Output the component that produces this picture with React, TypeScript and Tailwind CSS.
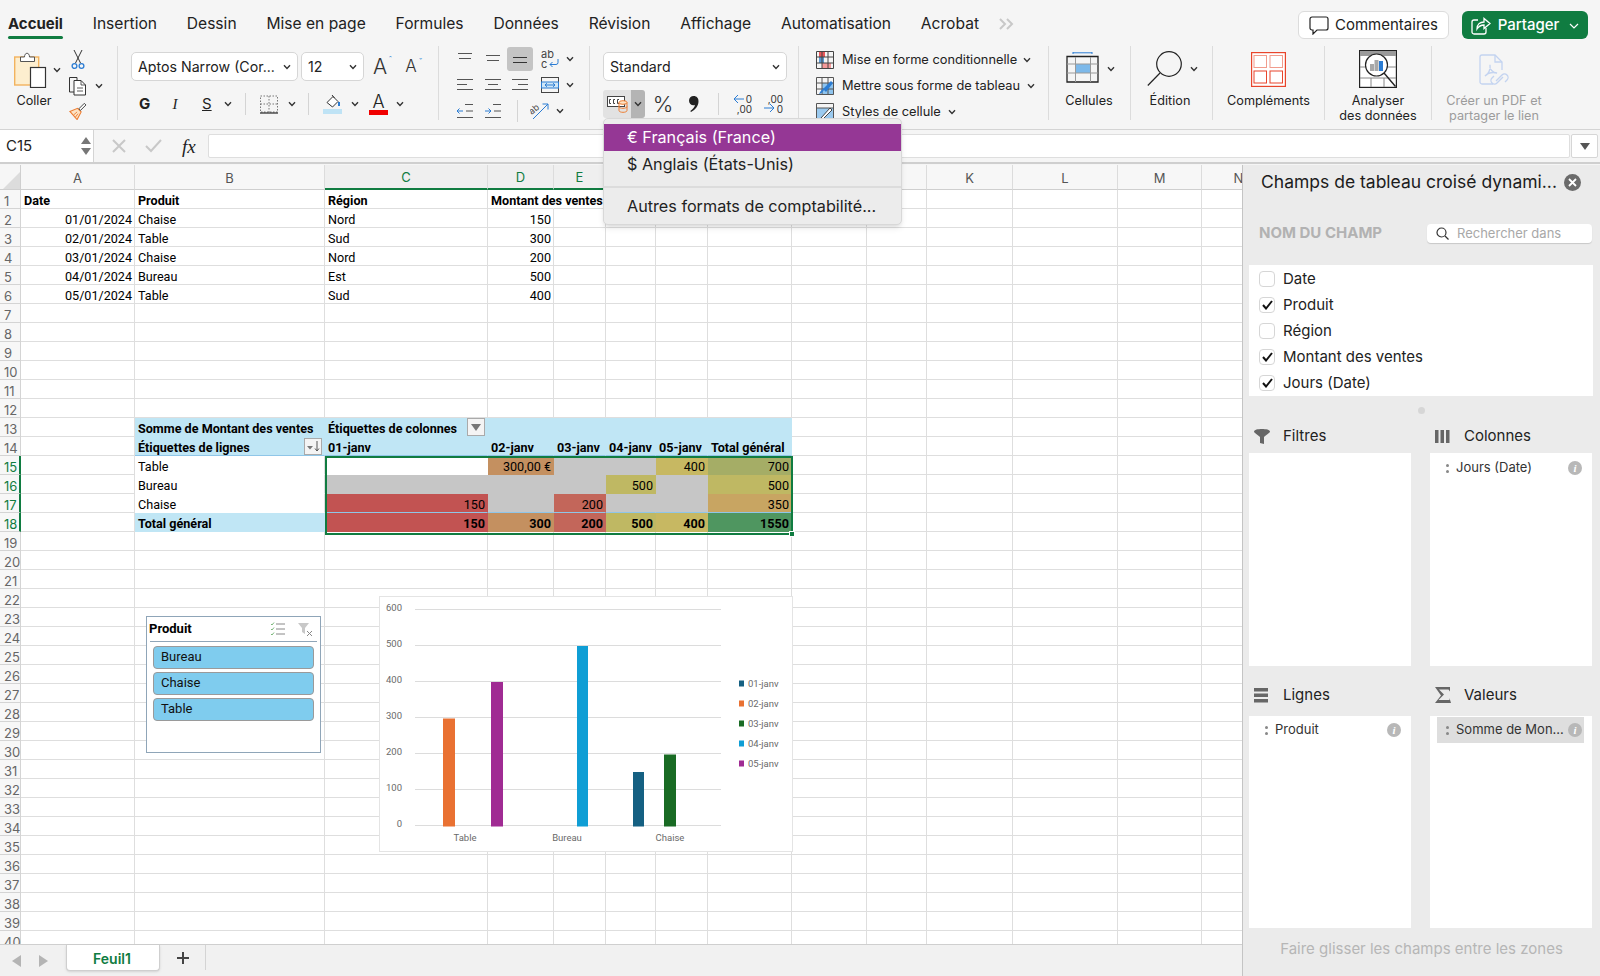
import React from 'react';
import clsx from 'clsx';

const tabs = ['Accueil', 'Insertion', 'Dessin', 'Mise en page', 'Formules', 'Données', 'Révision', 'Affichage', 'Automatisation', 'Acrobat'];

const columns = ['A', 'B', 'C', 'D', 'E', 'F', 'G', 'H', 'I', 'J', 'K', 'L', 'M', 'N'];

const cells: Record<string, string> = {
  A1: 'Date', B1: 'Produit', C1: 'Région', D1: 'Montant des ventes',
  A2: '01/01/2024', B2: 'Chaise', C2: 'Nord', D2: '150',
  A3: '02/01/2024', B3: 'Table', C3: 'Sud', D3: '300',
  A4: '03/01/2024', B4: 'Chaise', C4: 'Nord', D4: '200',
  A5: '04/01/2024', B5: 'Bureau', C5: 'Est', D5: '500',
  A6: '05/01/2024', B6: 'Table', C6: 'Sud', D6: '400',
  B13: 'Somme de Montant des ventes', C13: 'Étiquettes de colonnes',
  B14: 'Étiquettes de lignes', C14: '01-janv', D14: '02-janv', E14: '03-janv', F14: '04-janv', G14: '05-janv', H14: 'Total général',
  B15: 'Table', D15: '300,00 €', G15: '400', H15: '700',
  B16: 'Bureau', F16: '500', H16: '500',
  B17: 'Chaise', C17: '150', E17: '200', H17: '350',
  B18: 'Total général', C18: '150', D18: '300', E18: '200', F18: '500', G18: '400', H18: '1550',
};

const heat: Record<string, string> = {
  C15: 'bg-white', D15: 'bg-[#c49060]', E15: 'bg-[#c6c6c6]', F15: 'bg-[#c6c6c6]', G15: 'bg-[#c7b862]', H15: 'bg-[#a5ad66]',
  C16: 'bg-[#c6c6c6]', D16: 'bg-[#c6c6c6]', E16: 'bg-[#c6c6c6]', F16: 'bg-[#bfb863]', G16: 'bg-[#c6c6c6]', H16: 'bg-[#bfb863]',
  C17: 'bg-[#c25352]', D17: 'bg-[#c6c6c6]', E17: 'bg-[#c3665a]', F17: 'bg-[#c6c6c6]', G17: 'bg-[#c6c6c6]', H17: 'bg-[#c8a562]',
  C18: 'bg-[#c25352]', D18: 'bg-[#c49060]', E18: 'bg-[#c3665a]', F18: 'bg-[#bfb863]', G18: 'bg-[#c7b862]', H18: 'bg-[#4f9660]',
};

const pivotCols = ['B', 'C', 'D', 'E', 'F', 'G', 'H'];
const activeCols = ['C', 'D', 'E', 'F', 'G', 'H'];

function Chevron({ className }: { className?: string }) {
  return (
    <svg width="8" height="6" viewBox="0 0 8 6" className={clsx('shrink-0', className)} fill="none" stroke="#333" strokeWidth="1.4">
      <path d="M1 1.2 4 4.4 7 1.2" />
    </svg>
  );
}

function Lines({ rows, color = '#555', className }: { rows: number[][]; color?: string; className?: string }) {
  return (
    <svg width="18" height="14" viewBox="0 0 18 14" className={className} fill="none" stroke={color} strokeWidth="1">
      {rows.map(([a, b], i) => (
        <path key={i} d={`M${a} ${1.5 + i * 5}H${b}`} />
      ))}
    </svg>
  );
}

function PasteIcon() {
  return (
    <svg width="34" height="36" viewBox="0 0 34 36" fill="none">
      <rect x="0.7" y="5" width="24" height="28" fill="#fdeecf" stroke="#f2b35f" strokeWidth="1.4" />
      <path d="M6.5 9.5V5h4c0-5 5-5 5 0h5v4.500z" fill="#fff" stroke="#555" />
      <rect x="16.500" y="15.500" width="15" height="20" fill="#fff" stroke="#333" strokeWidth="1.2" />
    </svg>
  );
}

function ScissorsIcon() {
  return (
    <svg width="14" height="20" viewBox="0 0 14 20" fill="none" strokeWidth="1">
      <path d="M3 0 9.500 13M11 0 4.500 13" stroke="#333" />
      <circle cx="3.500" cy="16" r="2.400" stroke="#2b7cd3" strokeWidth="1.300" />
      <circle cx="10.500" cy="16" r="2.400" stroke="#2b7cd3" strokeWidth="1.300" />
    </svg>
  );
}

function CopyIcon() {
  return (
    <svg width="20" height="20" viewBox="0 0 20 20" fill="none" stroke="#333">
      <path d="M7 16H1.500V1.500H9V4" />
      <path d="M6 4.500h7l4.500 4.500v10H6z" fill="#fff" />
      <path d="M13 4.500V9h4.500M9 12h6M9 15h6" strokeWidth="0.8" />
    </svg>
  );
}

function PainterIcon() {
  return (
    <svg width="20" height="20" viewBox="0 0 20 20" fill="none">
      <path d="M1 10.500 9.500 7l4 4L9 19.500z" fill="#fde3c4" stroke="#ed7d31" strokeWidth="1.200" />
      <path d="M5 14.500 9 11M7 17l3-4" stroke="#ed7d31" />
      <path d="M11 7.500 17 1.500l1.800 1.800-6 6z" fill="#fff" stroke="#333" />
    </svg>
  );
}

function BordersIcon() {
  return (
    <svg width="18" height="19" viewBox="0 0 18 19" fill="none" stroke="#777" strokeWidth="1" strokeDasharray="1.500 1.500">
      <path d="M.5 1H17.500V17H.5zM9 1V17M.5 9H17.500" />
      <path d="M0 18H18" stroke="#222" strokeWidth="1.200" strokeDasharray="none" />
    </svg>
  );
}

function FillIcon() {
  return (
    <div className="flex w-[19px] flex-col items-center">
      <svg width="16" height="15" viewBox="0 0 16 15" fill="none">
        <path d="M2 8.500 8 2.500l5 5-5.500 5.500z" fill="#fff" stroke="#333" />
        <path d="M7 1 9.500 4" stroke="#333" />
        <path d="M14 8v4" stroke="#2b7cd3" strokeWidth="2" />
      </svg>
      <div className="h-[5px] w-[19px] bg-[#bfe3f5]" />
    </div>
  );
}

function FontColorIcon() {
  return (
    <div className="flex w-[19px] flex-col items-center">
      <span className="text-[18px] font-light leading-[15px]">A</span>
      <div className="mt-[1px] h-[5px] w-[19px] bg-[#f00000]" />
    </div>
  );
}

function WrapIcon() {
  return (
    <div className="relative h-[20px] w-[18px] text-[11px] leading-[10px] text-[#444]">
      <div>ab</div>
      <div>c</div>
      <svg width="10" height="9" viewBox="0 0 10 9" className="absolute left-[8px] top-[10px]" fill="none" stroke="#2b7cd3">
        <path d="M9 0v3.500a2 2 0 0 1-2 2H1M3.500 3 1 5.500 3.500 8" />
      </svg>
    </div>
  );
}

function MergeIcon() {
  return (
    <svg width="18" height="16" viewBox="0 0 18 16" fill="none" stroke="#444">
      <rect x=".5" y=".5" width="17" height="15" />
      <rect x=".5" y="5" width="17" height="6" fill="#cfe6f7" stroke="#2b7cd3" />
      <path d="M4 8h10M6 6.200 4 8l2 1.800M12 6.200 14 8l-2 1.800" stroke="#2b7cd3" />
    </svg>
  );
}

function IndentIcon({ right }: { right?: boolean }) {
  return (
    <svg width="18" height="16" viewBox="0 0 18 16" fill="none" stroke="#555">
      <path d="M9 1.500H17M10 8H17M1 14.500H17" />
      <path d={right ? 'M1 8H7M4.500 5.500 7 8 4.500 10.500' : 'M1 8H7M3.500 5.500 1 8 3.500 10.500'} stroke="#2b7cd3" />
    </svg>
  );
}

function OrientIcon() {
  return (
    <svg width="20" height="18" viewBox="0 0 20 18" fill="none">
      <text x="0" y="10" fontSize="9" fill="#444" transform="rotate(-40 5 9)">ab</text>
      <path d="M3 17 18 2M12.500 2H18V7.500" stroke="#2b7cd3" />
    </svg>
  );
}

function CurrencyIcon() {
  return (
    <svg width="21" height="18" viewBox="0 0 21 18" fill="none">
      <rect x=".5" y="1.500" width="17" height="10" fill="#fff" stroke="#444" />
      <path d="M4 4.500H2.500V8.500H4M8 4.500H6.500V8.500H8M12 4.500H10.500V8.500H12" stroke="#444" />
      <ellipse cx="16" cy="7.500" rx="4" ry="1.800" fill="#fde3c4" stroke="#ed7d31" />
      <path d="M12 7.500V15.500C12 17.900 20 17.900 20 15.500V7.500M12 11.500C12 13.900 20 13.900 20 11.500" fill="none" stroke="#ed7d31" />
    </svg>
  );
}

function CommaIcon() {
  return (
    <svg width="10" height="16" viewBox="0 0 10 16" fill="#222">
      <path d="M4.700 0C7.700 0 9.500 2.200 9.500 5.200 9.500 9.700 6.500 13.700 2 16L1.300 15C4 13.200 5.700 11 6 8.800 5.500 9.200 5 9.300 4.500 9.300 2 9.300 0 7.500 0 4.800 0 2 2 0 4.700 0z" />
    </svg>
  );
}

function DecimalIcon({ more }: { more?: boolean }) {
  return (
    <div className="relative h-[20px] w-[19px] text-[10px] leading-[10px] text-[#333]">
      <div className="absolute right-0 top-0">{more ? ',00' : '0'}</div>
      <div className="absolute right-0 top-[10px]">{more ? '0' : ',00'}</div>
      <svg width="11" height="10" viewBox="0 0 11 10" className={clsx('absolute left-0', more ? 'top-[9px]' : 'top-0')} fill="none" stroke="#2b7cd3">
        <path d={more ? 'M0 5H10M6 1 10 5 6 9' : 'M11 5H1M5 1 1 5 5 9'} />
      </svg>
    </div>
  );
}

function CondFormatIcon() {
  return (
    <svg width="18" height="18" viewBox="0 0 18 18" fill="none">
      <rect x="3" y="0" width="6" height="6" fill="#e8585b" />
      <rect x="3" y="6" width="5" height="6" fill="#5b9bd5" />
      <rect x="6" y="12" width="9" height="5" fill="#f59a9a" />
      <path d="M.5.5h17v17H.5zM6 .5v17M12 .5v17M.5 6h17M.5 12h17" stroke="#444" />
    </svg>
  );
}

function TableFormatIcon() {
  return (
    <svg width="18" height="18" viewBox="0 0 18 18" fill="none">
      <rect x="6" y="6" width="12" height="12" fill="#8ec4ee" />
      <path d="M.5.5h17v17H.5zM6 .5v17M12 .5v17M.5 6h17M.5 12h17" stroke="#555" />
      <path d="M3 17c3 0 4-3 5-4l2 2 7-9-2-2-7 7c-1 1-3 2-5 6z" fill="#2b7cd3" />
    </svg>
  );
}

function CellStyleIcon() {
  return (
    <svg width="18" height="18" viewBox="0 0 18 18" fill="none">
      <rect x="1" y="5" width="16" height="12" fill="#9bcaef" />
      <path d="M.5.5h17v17H.5zM.5 5h17" stroke="#555" />
      <path d="M5 15 14 5l2 2-9 9z" fill="#fff" stroke="#444" />
    </svg>
  );
}

function CellsIcon() {
  return (
    <svg width="33" height="33" viewBox="0 0 33 33" fill="none">
      <path d="M7 .8H26M7 0v2M26 0v2" stroke="#2b7cd3" />
      <rect x="9.500" y="12" width="15" height="9" fill="#7db9ea" />
      <path d="M1 30V4.500H32V30z" stroke="#222" strokeWidth="1.300" />
      <path d="M9.500 5V30M24.500 5V30M1 12H32M1 21H32" stroke="#999" />
    </svg>
  );
}

function SearchLargeIcon() {
  return (
    <svg width="36" height="36" viewBox="0 0 36 36" fill="none" stroke="#222" strokeWidth="1.200">
      <circle cx="22" cy="13" r="12.300" />
      <path d="M13 22 .8 34.500" />
    </svg>
  );
}

function AddinsIcon() {
  return (
    <svg width="35" height="35" viewBox="0 0 35 35" fill="none" stroke="#e8452c" className="shrink-0">
      <rect x=".6" y=".6" width="33.800" height="33.800" strokeWidth="1.200" fill="#fff" />
      <rect x="3" y="3.500" width="12.500" height="12" stroke="#f19c8d" />
      <rect x="19" y="3.500" width="12.500" height="12" stroke="#f19c8d" />
      <rect x="3" y="19" width="12.500" height="12" />
      <rect x="19" y="19" width="12.500" height="12" />
    </svg>
  );
}

function AnalyzeIcon() {
  return (
    <svg width="38" height="38" viewBox="0 0 38 38" fill="none" className="shrink-0">
      <rect x=".6" y=".6" width="36.800" height="36.800" stroke="#222" strokeWidth="1.200" fill="#fff" />
      <rect x="1" y="1" width="36" height="5" fill="#9a9a9a" />
      <path d="M1 17H6M28 17H37M1 28H37M12 28V37M25 28V37" stroke="#888" />
      <circle cx="17.500" cy="15" r="11" fill="#fff" stroke="#222" strokeWidth="1.200" />
      <rect x="11" y="14" width="4" height="7" fill="#a8a8a8" />
      <rect x="15.500" y="10" width="4" height="11" fill="#a8a8a8" />
      <rect x="20" y="11" width="4" height="10" fill="#2b7cd3" />
      <path d="M25 23 36.500 36.500" stroke="#222" strokeWidth="1.400" />
    </svg>
  );
}

function PdfIcon() {
  return (
    <svg width="31" height="34" viewBox="0 0 31 34" fill="none" stroke="#c3d3f0" strokeWidth="1.300" className="shrink-0">
      <path d="M14 30H3a2 2 0 0 1-2-2V3a2 2 0 0 1 2-2h13l7 7v8" />
      <path d="M16 1v7h7" />
      <path d="M6 22c3-1 6-7 5-11-1 4 3 8 7 8-4-1-9 0-12 3z" />
      <path d="M17 27l6-6a3.500 3.500 0 0 1 5 5l-2 2M24 23l-6 6a3.500 3.500 0 0 1-5-5l2-2" />
    </svg>
  );
}

function CommentIcon() {
  return (
    <svg width="20" height="19" viewBox="0 0 20 19" fill="none" stroke="#222" strokeWidth="1.200">
      <path d="M3 1h14a2 2 0 0 1 2 2v9a2 2 0 0 1-2 2H8l-4 4v-4H3a2 2 0 0 1-2-2V3a2 2 0 0 1 2-2z" />
    </svg>
  );
}

function ShareIcon() {
  return (
    <svg width="20" height="19" viewBox="0 0 20 19" fill="none" stroke="#fff" strokeWidth="1.300">
      <path d="M15 12v4a2 2 0 0 1-2 2H3a2 2 0 0 1-2-2V6a2 2 0 0 1 2-2h4" />
      <path d="M6 13c0-5 3-7 7-7V2.500L19 7.500l-6 5V9c-3 0-5 1-7 4z" />
    </svg>
  );
}

function Toolbar() {
  return (
    <div className="flex h-[90px] items-start border-b border-[#d4d4d4] text-[#222]">
      {/* Presse-papiers */}
      <div className="mt-[6px] flex h-[74px] w-[118px] shrink-0 border-r border-[#dcdcdc]">
        <div className="w-[68px] pl-[14px] pt-[6px]">
          <div className="flex items-center">
            <PasteIcon />
            <Chevron className="ml-[5px]" />
          </div>
          <div className="mt-[4px] w-[40px] text-center text-[12.700px] leading-[18px]">Coller</div>
        </div>
        <div className="mt-[4px] flex flex-col gap-[6px]">
          <div className="ml-[3px]"><ScissorsIcon /></div>
          <div className="flex items-center"><CopyIcon /><Chevron className="ml-[7px]" /></div>
          <PainterIcon />
        </div>
      </div>

      {/* Police */}
      <div className="mt-[6px] h-[74px] w-[321px] shrink-0 border-r border-[#dcdcdc] pl-[13px] pt-[6px]">
        <div className="flex h-[29px] items-center">
          <div className="flex h-[29px] w-[167px] items-center justify-between rounded-[5px] border border-[#d6d6d6] bg-white pl-[6px] pr-[6px] text-[14.200px]">
            <span>Aptos Narrow (Cor...</span>
            <Chevron />
          </div>
          <div className="ml-[3px] flex h-[29px] w-[63px] items-center justify-between rounded-[5px] border border-[#d6d6d6] bg-white pl-[6px] pr-[6px] text-[14.200px]">
            <span>12</span>
            <Chevron />
          </div>
          <div className="relative ml-[9px] text-[21px] font-light leading-none text-[#333]">
            A<span className="absolute -right-[5px] -top-[1px] text-[9px] text-[#2b7cd3]">ˆ</span>
          </div>
          <div className="relative ml-[18px] text-[17px] font-light leading-none text-[#333]">
            A<span className="absolute -right-[6px] -top-[1px] text-[9px] text-[#2b7cd3]">ˇ</span>
          </div>
        </div>
        <div className="mt-[11px] flex h-[24px] items-center">
          <span className="ml-[8px] w-[11px] text-center text-[15px] font-bold">G</span>
          <span className="ml-[21px] w-[8px] text-center text-[15px] italic [font-family:'Liberation_Serif',serif]">I</span>
          <span className="ml-[23px] w-[9px] text-center text-[15px] underline">S</span>
          <Chevron className="ml-[13px]" />
          <div className="ml-[13px] h-[22px] w-px bg-[#d4d4d4]" />
          <div className="ml-[14px]"><BordersIcon /></div>
          <Chevron className="ml-[10px]" />
          <div className="ml-[12px] h-[22px] w-px bg-[#d4d4d4]" />
          <div className="ml-[14px]"><FillIcon /></div>
          <Chevron className="ml-[9px]" />
          <div className="ml-[10px]"><FontColorIcon /></div>
          <Chevron className="ml-[8px]" />
        </div>
      </div>

      {/* Alignement */}
      <div className="mt-[6px] h-[74px] w-[151px] shrink-0 border-r border-[#dcdcdc] pl-[12px]">
        <div className="flex h-[26px] items-center">
          <div className="flex w-[28px] justify-center"><Lines rows={[[2, 16], [3, 15]]} /></div>
          <div className="flex w-[28px] justify-center"><Lines rows={[[2, 16], [3, 15]]} className="mt-[4px]" /></div>
          <div className="flex h-[24px] w-[26px] items-end justify-center rounded-[3px] bg-[#c4c4c4]"><Lines rows={[[2, 16], [2, 16]]} color="#333" className="mb-[1px]" /></div>
          <div className="ml-[6px] flex w-[22px] justify-center"><WrapIcon /></div>
          <Chevron className="ml-[5px]" />
        </div>
        <div className="flex h-[26px] items-center">
          <div className="flex w-[28px] justify-center"><Lines rows={[[1, 17], [1, 11], [1, 17]]} /></div>
          <div className="flex w-[28px] justify-center"><Lines rows={[[1, 17], [4, 14], [1, 17]]} /></div>
          <div className="flex w-[26px] justify-center"><Lines rows={[[1, 17], [7, 17], [1, 17]]} /></div>
          <div className="ml-[6px] flex w-[22px] justify-center"><MergeIcon /></div>
          <Chevron className="ml-[5px]" />
        </div>
        <div className="flex h-[26px] items-center">
          <div className="flex w-[28px] justify-center"><IndentIcon /></div>
          <div className="flex w-[28px] justify-center"><IndentIcon right /></div>
          <div className="ml-[10px] h-[22px] w-px bg-[#d4d4d4]" />
          <div className="ml-[12px]"><OrientIcon /></div>
          <Chevron className="ml-[6px]" />
        </div>
      </div>

      {/* Nombre */}
      <div className="mt-[6px] h-[74px] w-[209px] shrink-0 border-r border-[#dcdcdc] pl-[13px] pt-[6px]">
        <div className="flex h-[29px] w-[184px] items-center justify-between rounded-[5px] border border-[#d6d6d6] bg-white pl-[6px] pr-[6px] text-[14.200px]">
          <span>Standard</span>
          <Chevron />
        </div>
        <div className="mt-[9px] flex h-[28px] items-center">
          <div className="flex h-[28px] w-[28px] items-center justify-center rounded-l-[3px] bg-[#e2e2e2]"><CurrencyIcon /></div>
          <div className="flex h-[28px] w-[14px] items-center justify-center rounded-r-[3px] bg-[#b4b4b4]"><Chevron /></div>
          <span className="ml-[6px] w-[24px] text-center text-[22px] font-light leading-none text-[#333]">%</span>
          <div className="ml-[7px] flex w-[24px] justify-center"><CommaIcon /></div>
          <div className="ml-[12px] h-[22px] w-px bg-[#d4d4d4]" />
          <div className="ml-[14px]"><DecimalIcon /></div>
          <div className="ml-[12px]"><DecimalIcon more /></div>
        </div>
      </div>

      {/* Styles */}
      <div className="mt-[6px] h-[74px] w-[250px] shrink-0 border-r border-[#dcdcdc] pl-[17px] pt-[1px] text-[12.800px]">
        <div className="flex h-[26px] items-center gap-[8px]"><CondFormatIcon /><span className="w-[172px] whitespace-nowrap">Mise en forme conditionnelle</span><Chevron className="ml-[1px]" /></div>
        <div className="flex h-[26px] items-center gap-[8px]"><TableFormatIcon /><span className="w-[178px] whitespace-nowrap">Mettre sous forme de tableau</span><Chevron className="-ml-[1px]" /></div>
        <div className="flex h-[26px] items-center gap-[8px]"><CellStyleIcon /><span className="whitespace-nowrap">Styles de cellule</span><Chevron className="-ml-[1px]" /></div>
      </div>

      {/* Cellules */}
      <div className="mt-[6px] h-[74px] w-[82px] shrink-0 border-r border-[#dcdcdc] text-[12.700px]">
        <div className="flex h-[39px] items-center pl-[17px] pt-[6px]"><CellsIcon /><Chevron className="ml-[8px]" /></div>
        <div className="mt-[7px] w-[80px] text-center leading-[18px]">Cellules</div>
      </div>

      {/* Édition */}
      <div className="mt-[6px] h-[74px] w-[82px] shrink-0 border-r border-[#dcdcdc] text-[12.700px]">
        <div className="flex h-[39px] items-center pl-[16px] pt-[6px]"><SearchLargeIcon /><Chevron className="ml-[7px]" /></div>
        <div className="mt-[7px] w-[78px] text-center leading-[18px]">Édition</div>
      </div>

      {/* Compléments */}
      <div className="mt-[6px] flex h-[74px] w-[112px] shrink-0 flex-col items-center border-r border-[#dcdcdc] pt-[6px] text-[12.700px]">
        <AddinsIcon />
        <div className="mt-[5px] leading-[18px]">Compléments</div>
      </div>

      {/* Analyser */}
      <div className="mt-[6px] flex h-[74px] w-[107px] shrink-0 flex-col items-center border-r border-[#dcdcdc] pt-[4px] text-center text-[12.700px]">
        <AnalyzeIcon />
        <div className="mt-[5px] shrink-0 leading-[15px]">Analyser<br />des données</div>
      </div>

      {/* PDF */}
      <div className="mt-[6px] flex h-[74px] w-[124px] shrink-0 flex-col items-center pt-[8px] text-center text-[12.700px] text-[#9c9c9c]">
        <PdfIcon />
        <div className="mt-[5px] shrink-0 leading-[15px]">Créer un PDF et<br />partager le lien</div>
      </div>
    </div>
  );
}

function FormulaBar() {
  return (
    <div className="flex h-[34px] items-center border-b-[2px] border-[#cfcfcf]">
      <div className="flex h-[32px] w-[94px] shrink-0 items-center justify-between border-r border-[#d4d4d4] bg-white pl-[6px] pr-[2px] text-[15px] text-[#222]">
        <span>C15</span>
        <div className="flex flex-col gap-[4px]">
          <svg width="10" height="7" viewBox="0 0 10 7"><path d="M5 0 10 7H0z" fill="#777" /></svg>
          <svg width="10" height="7" viewBox="0 0 10 7"><path d="M5 7 10 0H0z" fill="#777" /></svg>
        </div>
      </div>
      <svg width="14" height="14" viewBox="0 0 14 14" className="ml-[18px] shrink-0" fill="none" stroke="#c8c8c8" strokeWidth="2"><path d="M1 1 13 13M13 1 1 13" /></svg>
      <svg width="17" height="14" viewBox="0 0 17 14" className="ml-[19px] shrink-0" fill="none" stroke="#c8c8c8" strokeWidth="2"><path d="M1 7 6 12 16 1" /></svg>
      <span className="ml-[20px] w-[18px] shrink-0 text-[19px] italic leading-none text-[#222] [font-family:'Liberation_Serif',serif]">fx</span>
      <div className="ml-[8px] h-[24px] flex-1 rounded-[2px] border border-[#dedede] bg-white" />
      <div className="ml-[1px] mr-[2px] flex h-[24px] w-[27px] shrink-0 items-center justify-center rounded-[2px] border border-[#d6d6d6] bg-white">
        <svg width="10" height="7" viewBox="0 0 10 7"><path d="M5 7 10 0H0z" fill="#555" /></svg>
      </div>
    </div>
  );
}

function Cell({ col, row }: { col: string; row: number }) {
  const id = `${col}${row}`;
  const text = cells[id];
  const isBlue = ((row === 13 || row === 14) && pivotCols.includes(col)) || id === 'B18';
  const isHeat = !!heat[id];
  const isLabel = col === 'B' && row >= 15 && row <= 17;
  const bold = row === 1 || row === 13 || row === 14 || (row === 18 && pivotCols.includes(col));
  const right = (col === 'A' && row >= 2 && row <= 6) || (col === 'D' && row >= 2 && row <= 6) || isHeat;
  const hideRight = id === 'D1';

  return (
    <div
      className={clsx(
        'flex items-center whitespace-nowrap border-b border-r border-[#dedede] pl-[3px] pr-[2px] pt-[5px] text-[12.600px] text-black [font-family:Roboto,sans-serif]',
        bold && 'font-bold',
        right && 'justify-end',
        isBlue && 'border-transparent bg-[#c0e6f5]',
        isHeat && `border-transparent ${heat[id]}`,
        isLabel && 'border-b-transparent',
        hideRight && 'border-r-transparent',
        (row === 14 || row === 17) && pivotCols.includes(col) && 'border-b-[#8fc6e8]'
      )}
    >
      {text && <span>{text}</span>}
      {id === 'C13' && (
        <div className="-mt-[5px] ml-auto flex h-[18px] w-[18px] shrink-0 items-center justify-center border border-[#aaa] bg-[#f4f4f4]">
          <svg width="10" height="7" viewBox="0 0 10 7"><path d="M5 7 10 0H0z" fill="#777" /></svg>
        </div>
      )}
      {id === 'B14' && (
        <div className="-mt-[5px] ml-auto flex h-[17px] w-[18px] shrink-0 items-center justify-center border border-[#aaa] bg-[#f4f4f4]">
          <svg width="13" height="11" viewBox="0 0 13 11" fill="none"><path d="M0 5H6L3 8.500z" fill="#777" /><path d="M10 0V10M8 7.500 10 10 12 7.500" stroke="#555" /></svg>
        </div>
      )}
    </div>
  );
}

function Slicer() {
  return (
    <div className="absolute left-[146px] top-[451px] h-[137px] w-[175px] border border-[#8fa5b8] bg-white px-[3px] [font-family:Roboto,sans-serif]">
      <div className="flex h-[25px] items-center justify-between border-b border-[#8fa5b8] pr-[4px]">
        <span className="-ml-[1px] text-[13px] font-bold text-black">Produit</span>
        <div className="flex items-center gap-[13px]">
          <svg width="15" height="14" viewBox="0 0 15 14" fill="none"><path d="M1 2 2 3 4 .5M1 7 2 8 4 5.500M1 12 2 13 4 10.500" stroke="#7cb87c" /><path d="M6 2H15M6 7H15M6 12H15" stroke="#888" /></svg>
          <svg width="15" height="15" viewBox="0 0 15 15" fill="none"><path d="M0 1H11L7 6V12L4 10V6z" fill="#c8c8c8" /><path d="M9 9 14 14M14 9 9 14" stroke="#888" /></svg>
        </div>
      </div>
      <div className="mt-[4px] flex flex-col gap-[3px] px-[3px]">
        {['Bureau', 'Chaise', 'Table'].map((name) => (
          <div key={name} className="flex h-[23px] items-center rounded-[4px] border border-[#9a9a9a] bg-[#7fccee] pb-[1px] pl-[7px] text-[13px] text-[#111]">{name}</div>
        ))}
      </div>
    </div>
  );
}

const chartBars = [
  { x: 63, y: 121.500, w: 12, h: 108, c: '#e97132' },
  { x: 111, y: 85, w: 12, h: 144.500, c: '#a02b93' },
  { x: 197, y: 49, w: 11, h: 180.500, c: '#0f9ed5' },
  { x: 253, y: 175, w: 11, h: 54.500, c: '#156082' },
  { x: 284, y: 157.500, w: 12, h: 72, c: '#196b24' },
];

const chartLegend = [
  { l: '01-janv', c: '#156082' },
  { l: '02-janv', c: '#e97132' },
  { l: '03-janv', c: '#196b24' },
  { l: '04-janv', c: '#0f9ed5' },
  { l: '05-janv', c: '#a02b93' },
];

function Chart() {
  return (
    <div className="absolute left-[379px] top-[431px] h-[256px] w-[414px] border border-[#e4e4e4] bg-white">
      <svg width="412" height="254" viewBox="0 0 412 254" fontFamily="Roboto, sans-serif" fontSize="9.500" fill="#6a6a6a">
        {[600, 500, 400, 300, 200, 100, 0].map((v, i) => (
          <g key={v}>
            <text x="22" y={13.500 + i * 36} textAnchor="end">{v}</text>
            <path d={`M35 ${12.500 + i * 36}H341`} stroke="#dcdcdc" />
          </g>
        ))}
        {chartBars.map((b) => (
          <rect key={b.x} x={b.x} y={b.y} width={b.w} height={b.h} fill={b.c} />
        ))}
        <text x="85" y="244" textAnchor="middle">Table</text>
        <text x="187" y="244" textAnchor="middle">Bureau</text>
        <text x="290" y="244" textAnchor="middle">Chaise</text>
        {chartLegend.map((d, i) => (
          <g key={d.l}>
            <rect x="359" y={83.500 + i * 20} width="5" height="6" fill={d.c} />
            <text x="368" y={90 + i * 20}>{d.l}</text>
          </g>
        ))}
      </svg>
    </div>
  );
}

function Sheet() {
  const rows = Array.from({ length: 40 }, (_, i) => i + 1);
  return (
    <div className="relative h-[779px] overflow-hidden bg-white">
      <div className="grid w-[1276px] grid-cols-[21px_114px_190px_163px_66px_52px_50px_52px_84px_75px_60px_86px_105px_84px_74px] auto-rows-[19px] grid-rows-[25px]">
        <div className="flex items-end justify-end border-b border-r border-[#cfcfcf] bg-[#f6f6f6]">
          <svg width="17" height="17" viewBox="0 0 17 17"><path d="M17 0V17H0z" fill="#dcdcdc" /></svg>
        </div>
        {columns.map((c) => (
          <div
            key={c}
            className={clsx(
              'flex items-center justify-center border-r border-[#dcdcdc] pt-[3px] text-[13px]',
              activeCols.includes(c) ? 'border-b-2 border-b-[#107c41] bg-[#efefef] text-[#107c41]' : 'border-b border-b-[#cfcfcf] bg-[#f7f7f7] text-[#555]'
            )}
          >
            {c}
          </div>
        ))}
        {rows.map((r) => (
          <React.Fragment key={r}>
            <div
              className={clsx(
                'flex items-center border-b border-r border-[#d4d4d4] bg-[#f7f7f7] pl-[4px] pt-[5px] text-[13px]',
                r >= 15 && r <= 18 ? 'border-r-2 border-r-[#107c41] text-[#107c41]' : 'text-[#666]'
              )}
            >
              {r}
            </div>
            {columns.map((c) => (
              <Cell key={c} col={c} row={r} />
            ))}
          </React.Fragment>
        ))}
      </div>

      {/* Sélection C15:H18 */}
      <div className="pointer-events-none absolute left-[325px] top-[291px] h-[79px] w-[468px] border-2 border-[#107c41]" />
      <div className="absolute left-[789px] top-[366px] h-[6px] w-[6px] border border-white bg-[#107c41]" />

      <Slicer />
      <Chart />
    </div>
  );
}

function SheetTabs() {
  return (
    <div className="flex h-[32px] items-start border-t border-[#cfcfcf] bg-[#f1f1f1]">
      <svg width="9" height="12" viewBox="0 0 9 12" className="ml-[12px] mt-[10px]"><path d="M0 6 9 0V12z" fill="#b4b4b4" /></svg>
      <svg width="9" height="12" viewBox="0 0 9 12" className="ml-[18px] mt-[10px]"><path d="M9 6 0 0V12z" fill="#b4b4b4" /></svg>
      <div className="ml-[18px] flex h-[26px] w-[94px] items-center justify-center rounded-b-[4px] border-x border-b border-[#cfcfcf] bg-white pt-[2px] pr-[2px] text-[14px] font-semibold text-[#107c41] shadow-sm">Feuil1</div>
      <svg width="12" height="12" viewBox="0 0 12 12" className="ml-[17px] mt-[7px]" fill="none" stroke="#444" strokeWidth="2"><path d="M6 0V12M0 6H12" /></svg>
      <div className="ml-[16px] h-[25px] w-px bg-[#d4d4d4]" />
    </div>
  );
}

function Dots() {
  return (
    <div className="flex flex-col gap-[3px]">
      <div className="h-[3px] w-[3px] rounded-full bg-[#888]" />
      <div className="h-[3px] w-[3px] rounded-full bg-[#888]" />
    </div>
  );
}

function Info() {
  return (
    <div className="flex h-[14px] w-[14px] shrink-0 items-center justify-center rounded-full bg-[#b8b8b8] text-[11px] font-bold italic leading-none text-white [font-family:'Liberation_Serif',serif]">i</div>
  );
}

function FieldBox({ label, className }: { label: string; className: string }) {
  return (
    <div className={clsx('flex h-[26px] items-center text-[13px] text-[#333]', className)}>
      <Dots />
      <span className="ml-[7px]">{label}</span>
      <div className="ml-auto"><Info /></div>
    </div>
  );
}

function AreaHeader({ icon, label }: { icon: React.ReactNode; label: string }) {
  return (
    <div className="flex h-[24px] items-center pl-[5px]">
      <div className="w-[29px]">{icon}</div>
      <span className="text-[15px] text-[#222]">{label}</span>
    </div>
  );
}

function FieldsPanel() {
  const fields = [
    { name: 'Date', on: false },
    { name: 'Produit', on: true },
    { name: 'Région', on: false },
    { name: 'Montant des ventes', on: true },
    { name: 'Jours (Date)', on: true },
  ];
  return (
    <div className="h-full w-[358px] shrink-0 border-l border-[#c4c4c4] bg-[#ebebeb]">
      <div className="flex h-[34px] items-center justify-between pl-[18px] pr-[19px]">
        <span className="text-[17.500px] text-[#1c1c1c]">Champs de tableau croisé dynami...</span>
        <div className="flex h-[17px] w-[17px] items-center justify-center rounded-full bg-[#6b6b6b]">
          <svg width="9" height="9" viewBox="0 0 9 9" fill="none" stroke="#fff" strokeWidth="1.800"><path d="M1 1 8 8M8 1 1 8" /></svg>
        </div>
      </div>
      <div className="mt-[25px] flex h-[19px] items-center justify-between pl-[16px] pr-[8px]">
        <span className="text-[15px] font-bold text-[#b2b2b2]">NOM DU CHAMP</span>
        <div className="flex h-[19px] w-[165px] items-center rounded-[4px] bg-white pl-[9px] text-[13px] text-[#a8a8a8] shadow-[0_1px_1px_rgba(0,0,0,0.15)]">
          <svg width="13" height="13" viewBox="0 0 13 13" fill="none" stroke="#333" strokeWidth="1.200"><circle cx="5.500" cy="5.500" r="4.500" /><path d="M9 9 12.500 12.500" /></svg>
          <span className="ml-[8px]">Rechercher dans</span>
        </div>
      </div>
      <div className="ml-[6px] mr-[7px] mt-[22px] h-[131px] bg-white pt-[1px]">
        {fields.map((f) => (
          <div key={f.name} className="flex h-[26px] items-center pl-[10px] text-[15px] text-[#222]">
            <div className="flex h-[16px] w-[16px] items-center justify-center rounded-[4px] border border-[#d6d6d6] bg-white">
              {f.on && <svg width="11" height="10" viewBox="0 0 11 10" fill="none" stroke="#111" strokeWidth="2"><path d="M1 5 4 8.500 10 1" /></svg>}
            </div>
            <span className="ml-[8px]">{f.name}</span>
          </div>
        ))}
      </div>
      <div className="flex h-[28px] items-center justify-center">
        <div className="h-[7px] w-[7px] rounded-full bg-[#d6d6d6]" />
      </div>
      <div className="ml-[6px] grid w-[344px] grid-cols-[162px_162px] gap-x-[19px]">
        <div>
          <AreaHeader
            label="Filtres"
            icon={<svg width="16" height="15" viewBox="0 0 16 15"><path d="M8 0C4 0 0 .800 0 2.500 0 4 4 6 6 8v6l4 1V8c2-2 6-4 6-5.500C16 .800 12 0 8 0z" fill="#666" /></svg>}
          />
          <div className="mt-[5px] h-[213px] bg-white" />
        </div>
        <div>
          <AreaHeader
            label="Colonnes"
            icon={<svg width="15" height="13" viewBox="0 0 15 13" fill="#666"><rect width="3.500" height="13" /><rect x="5.500" width="3.500" height="13" /><rect x="11" width="3.500" height="13" /></svg>}
          />
          <div className="mt-[5px] h-[213px] bg-white pt-[2px]">
            <FieldBox label="Jours (Date)" className="pl-[16px] pr-[10px]" />
          </div>
        </div>
        <div className="mt-[17px]">
          <AreaHeader
            label="Lignes"
            icon={<svg width="15" height="15" viewBox="0 0 15 15" fill="#666"><rect width="14" height="3.500" /><rect y="5.500" width="14" height="3.500" /><rect y="11" width="14" height="3.500" /></svg>}
          />
          <div className="mt-[9px] h-[212px] bg-white pt-[1px]">
            <FieldBox label="Produit" className="pl-[16px] pr-[10px]" />
          </div>
        </div>
        <div className="mt-[17px]">
          <AreaHeader
            label="Valeurs"
            icon={<svg width="16" height="16" viewBox="0 0 16 16" fill="#666"><path d="M0 0H15V4.500L13.500 2.500H4L9 7.500 3.500 13H14.500V11L16 16H0L6 8.500z" /></svg>}
          />
          <div className="mt-[9px] h-[212px] bg-white pl-[7px] pr-[8px] pt-[1px]">
            <FieldBox label="Somme de Mon..." className="bg-[#dedede] pl-[9px] pr-[2px]" />
          </div>
        </div>
      </div>
      <div className="mt-[10px] text-center text-[15px] text-[#b6b6b6]">Faire glisser les champs entre les zones</div>
    </div>
  );
}

export default function App() {
  return (
    <div className="relative flex h-[976px] w-[1600px] flex-col overflow-hidden bg-[#f5f5f5] [font-family:Inter,sans-serif]">
      {/* Onglets */}
      <div className="flex h-[40px] items-start">
        <div className="flex gap-[29.800px] pl-[8px]">
          {tabs.map((t) => (
            <div key={t} className={clsx('relative h-[39px] pt-[14px] leading-[20px] text-[#222]', t === 'Accueil' ? 'text-[15px]' : 'text-[15.600px]')}>
              <span className={clsx(t === 'Accueil' && 'font-bold')}>{t}</span>
              {t === 'Accueil' && <div className="absolute bottom-0 left-0 right-0 h-[3px] rounded-[2px] bg-[#107c41]" />}
            </div>
          ))}
          <svg width="15" height="12" viewBox="0 0 15 12" className="-ml-[10px] mt-[18px]" fill="none" stroke="#c8c8c8" strokeWidth="2">
            <path d="M1 1 6 6 1 11M8 1 13 6 8 11" />
          </svg>
        </div>
        <div className="ml-auto mr-[12px] mt-[11px] flex gap-[13px]">
          <div className="flex h-[28px] w-[151px] items-center justify-center gap-[6px] rounded-[6px] border border-[#dcdcdc] bg-white pt-[1px] text-[15px] text-[#222]">
            <CommentIcon />Commentaires
          </div>
          <div className="flex h-[28px] w-[126px] items-center justify-center gap-[7px] rounded-[6px] bg-[#107c41] pt-[1px] text-[15px] font-medium text-white">
            <ShareIcon />Partager
            <svg width="10" height="6" viewBox="0 0 10 6" className="ml-[3px]" fill="none" stroke="#fff" strokeWidth="1.200"><path d="M1 1 5 5 9 1" /></svg>
          </div>
        </div>
      </div>

      <Toolbar />
      <FormulaBar />

      <div className="flex min-h-0 flex-1 pt-[1px]">
        <div className="flex min-w-0 flex-1 flex-col">
          <Sheet />
          <SheetTabs />
        </div>
        <FieldsPanel />
      </div>

      {/* Menu déroulant devise */}
      <div className="absolute left-[603px] top-[118px] h-[107px] w-[299px] rounded-[5px] border border-[#d8d8d8] bg-[#ececec] py-[5px] text-[16.200px] text-[#222] shadow-md">
        <div className="flex h-[27px] items-center bg-[#953795] pl-[23px] text-white">€ Français (France)</div>
        <div className="flex h-[27px] items-center pl-[23px]">$ Anglais (États-Unis)</div>
        <div className="mt-[8px] h-[2px] bg-[#dcdcdc]" />
        <div className="mt-[5px] flex h-[27px] items-center pl-[23px]">Autres formats de comptabilité...</div>
      </div>
    </div>
  );
}
